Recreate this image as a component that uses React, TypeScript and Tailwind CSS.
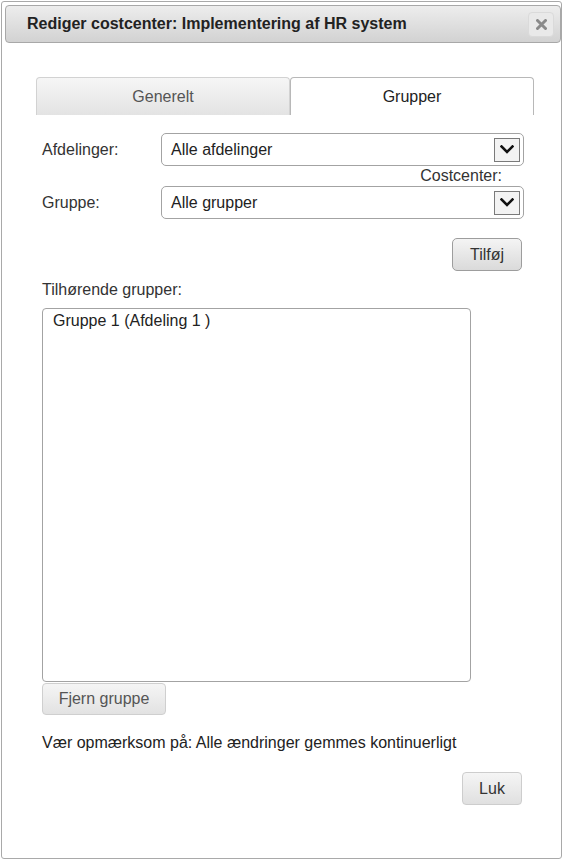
import React from 'react';

const Chevron: React.FC = () => (
  <svg width="14" height="9" viewBox="0 0 14 9" fill="none">
    <path d="M1.5 1.5 L7 7 L12.5 1.5" stroke="#111" strokeWidth="2.6" strokeLinecap="square" />
  </svg>
);

const Select: React.FC<{ value: string }> = ({ value }) => (
  <div className="w-[363px] h-[33px] flex items-center justify-between border border-[#a3a3a3] rounded-[5px] pl-[9px] pr-[3px] bg-white text-[16px] text-[#222]">
    <span>{value}</span>
    <div className="w-[26px] h-[24px] flex items-center justify-center border border-[#7a7a7a] bg-[#f3f3f3]">
      <Chevron />
    </div>
  </div>
);

export default function App() {
  return (
    <div className="w-[564px] h-[864px] bg-white pt-px pl-px font-['Liberation_Sans',Arial,sans-serif] text-[16px] text-[#333]">
      <div className="w-[561px] h-[858px] border border-[#a9a9a9] rounded-[3px] flex flex-col">
        {/* header */}
        <div className="ml-[3px] mt-[3px] w-[556px] h-[38px] border border-[#a8a8a8] rounded-[4px] bg-linear-to-b from-[#ededed] to-[#d2d2d2] flex items-center justify-between pl-[21px] pr-[6px]">
          <span className="font-bold text-[#222]">Rediger costcenter: Implementering af HR system</span>
          <button className="w-[26px] h-[25px] flex items-center justify-center rounded-[4px] border border-[#dadada] bg-[#e9e9e9]">
            <svg width="11" height="11" viewBox="0 0 11 11">
              <path d="M1.5 1.5 L9.5 9.5 M9.5 1.5 L1.5 9.5" stroke="#8a8a8a" strokeWidth="3" strokeLinecap="round" />
            </svg>
          </button>
        </div>

        {/* tabs */}
        <div className="ml-[34px] mt-[34px] flex">
          <div className="w-[254px] h-[38px] flex items-center justify-center border border-b-0 border-[#d2d2d2] rounded-t-[4px] bg-linear-to-b from-[#f6f6f6] to-[#e3e3e3] text-[#555]">
            Generelt
          </div>
          <div className="w-[244px] h-[38px] flex items-center justify-center border border-b-0 border-[#b8b8b8] rounded-t-[4px] bg-white text-[#222]">
            Grupper
          </div>
        </div>

        {/* body */}
        <div className="pl-[40px] flex flex-col">
          <div className="mt-[18px] w-[482px] flex items-center">
            <span className="w-[119px]">Afdelinger:</span>
            <Select value="Alle afdelinger" />
          </div>
          <div className="w-[460px] h-[20px] leading-[20px] text-right">Costcenter:</div>
          <div className="w-[482px] flex items-center">
            <span className="w-[119px]">Gruppe:</span>
            <Select value="Alle grupper" />
          </div>

          <div className="mt-[19px] w-[480px] flex justify-end">
            <button className="w-[70px] h-[33px] rounded-[5px] border border-[#9d9d9d] bg-linear-to-b from-[#f4f4f4] to-[#dadada] text-[#333]">
              Tilføj
            </button>
          </div>

          <div className="mt-[10px] leading-[18px]">Tilhørende grupper:</div>

          <div className="mt-[9px] w-[429px] h-[374px] border border-[#a3a3a3] rounded-[4px] px-[10px] pt-[2px] leading-[20px] text-[#222]">
            Gruppe 1 (Afdeling 1 )
          </div>

          <button className="mt-px w-[124px] h-[32px] rounded-[4px] border border-[#cfcfcf] bg-linear-to-b from-[#f5f5f5] to-[#e2e2e2] text-[#555]">
            Fjern gruppe
          </button>

          <div className="mt-[19px] leading-[18px] text-[#222]">Vær opmærksom på: Alle ændringer gemmes kontinuerligt</div>

          <div className="mt-[20px] w-[480px] flex justify-end">
            <button className="w-[60px] h-[33px] rounded-[4px] border border-[#cdcdcd] bg-linear-to-b from-[#f5f5f5] to-[#e0e0e0] text-[#333]">
              Luk
            </button>
          </div>
        </div>
      </div>
    </div>
  );
}
